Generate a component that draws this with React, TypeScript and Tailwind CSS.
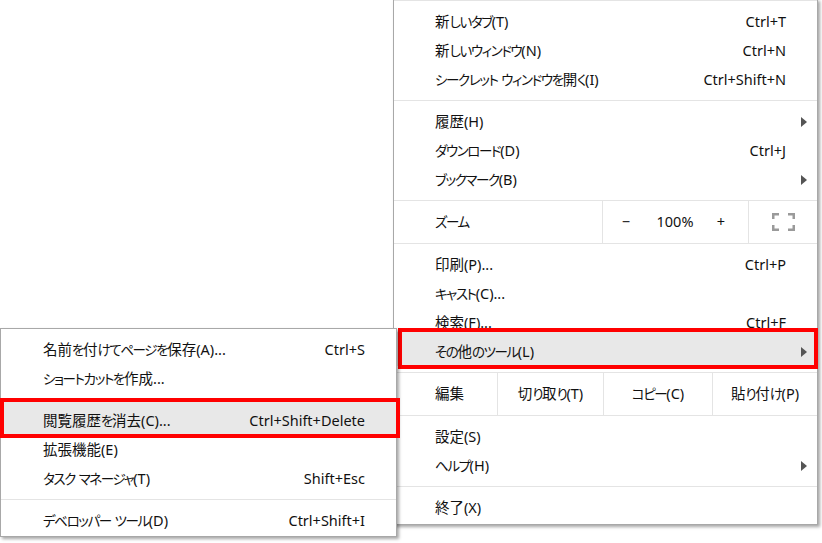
import React from 'react';

type Item = { label: string; shortcut?: string; arrow?: boolean; highlight?: boolean };

// kana in the reference font are narrower than Noto's, so shrink those runs a little
function Jp({ text }: { text: string }) {
  const parts = text.split(/([\u3040-\u30ff]+)/);
  return (
    <span className="whitespace-nowrap">
      {parts.map((p, i) =>
        /^[\u3040-\u30ff]+$/.test(p) ? (
          <span key={i} className="text-[13.5px] tracking-[-1.4px]">
            {p}
          </span>
        ) : (
          <React.Fragment key={i}>{p}</React.Fragment>
        )
      )}
    </span>
  );
}

function Arrow() {
  return (
    <svg width="6" height="10" viewBox="0 0 6 10">
      <polygon points="0,0 6,5 0,10" fill="#555" />
    </svg>
  );
}

function Row({ item, sub }: { item: Item; sub?: boolean }) {
  return (
    <div
      className={`flex h-[29px] items-center pr-[10px] ${sub ? 'pl-[42px]' : 'pl-[41px]'} ${
        item.highlight ? (sub ? 'bg-[#e8e8e8] shadow-[0_-4px_0_0_#e8e8e8]' : 'bg-[#e8e8e8] shadow-[0_-5px_0_0_#e8e8e8]') : ''
      }`}
    >
      <Jp text={item.label} />
      <span className="flex-1" />
      {item.shortcut && <span className="whitespace-nowrap">{item.shortcut}</span>}
      <span className="flex w-[21px] justify-end">{item.arrow && <Arrow />}</span>
    </div>
  );
}

function Sep() {
  return <div className="my-[6px] h-px bg-[#e4e4e4]" />;
}

function FullscreenIcon() {
  return (
    <svg width="23" height="18" viewBox="0 0 23 18" fill="none" stroke="#9a9a9a" strokeWidth="2.5">
      <path d="M1.25 6V1.25H7" />
      <path d="M16 1.25H21.75V6" />
      <path d="M1.25 12V16.75H7" />
      <path d="M16 16.75H21.75V12" />
    </svg>
  );
}

export default function App() {
  const top: Item[] = [
    { label: '新しいタブ(T)', shortcut: 'Ctrl+T' },
    { label: '新しいウィンドウ(N)', shortcut: 'Ctrl+N' },
    { label: 'シークレット ウィンドウを開く(I)', shortcut: 'Ctrl+Shift+N' },
  ];
  const history: Item[] = [
    { label: '履歴(H)', arrow: true },
    { label: 'ダウンロード(D)', shortcut: 'Ctrl+J' },
    { label: 'ブックマーク(B)', arrow: true },
  ];
  const tools: Item[] = [
    { label: '印刷(P)...', shortcut: 'Ctrl+P' },
    { label: 'キャスト(C)...' },
    { label: '検索(F)...', shortcut: 'Ctrl+F' },
    { label: 'その他のツール(L)', arrow: true, highlight: true },
  ];
  const settings: Item[] = [
    { label: '設定(S)' },
    { label: 'ヘルプ(H)', arrow: true },
  ];
  const subA: Item[] = [
    { label: '名前を付けてページを保存(A)...', shortcut: 'Ctrl+S' },
    { label: 'ショートカットを作成...' },
  ];
  const subB: Item[] = [
    { label: '閲覧履歴を消去(C)...', shortcut: 'Ctrl+Shift+Delete', highlight: true },
    { label: '拡張機能(E)' },
    { label: 'タスク マネージャ(T)', shortcut: 'Shift+Esc' },
  ];

  return (
    <div className="relative h-[543px] w-[822px] overflow-hidden bg-white font-['Noto_Sans','Noto_Sans_CJK_JP',sans-serif] text-[14.5px] text-[#111] [font-feature-settings:'palt']">
      {/* main menu */}
      <div className="absolute left-[393px] top-[-1px] w-[425px] border border-[#a8a8a8] bg-white pb-[2px] shadow-[2px_2px_3px_rgba(0,0,0,0.35)]">
        <div className="mb-[6px] h-px bg-[#e4e4e4]" />
        {top.map((it) => (
          <Row key={it.label} item={it} />
        ))}
        <Sep />
        {history.map((it) => (
          <Row key={it.label} item={it} />
        ))}
        <div className="mt-[6px] h-px bg-[#e4e4e4]" />
        <div className="flex h-[42px] items-stretch">
          <div className="flex flex-1 items-center pl-[41px]">
            <Jp text="ズーム" />
          </div>
          <div className="flex w-[146px] items-center border-l border-[#e4e4e4]">
            <span className="w-[46px] text-center">−</span>
            <span className="w-[52px] text-center">100%</span>
            <span className="w-[40px] text-center">+</span>
          </div>
          <div className="flex w-[69px] items-center justify-center border-l border-[#e4e4e4]">
            <FullscreenIcon />
          </div>
        </div>
        <div className="mb-[6px] h-px bg-[#e4e4e4]" />
        {tools.map((it) => (
          <Row key={it.label} item={it} />
        ))}
        <div className="mt-[6px] h-px bg-[#e4e4e4]" />
        <div className="flex h-[42px] items-stretch">
          <div className="flex w-[103px] items-center pl-[41px]">編集</div>
          <div className="flex w-[106px] items-center justify-center border-l border-[#e4e4e4]">
            <Jp text="切り取り(T)" />
          </div>
          <div className="flex w-[109px] items-center justify-center border-l border-[#e4e4e4]">
            <Jp text="コピー(C)" />
          </div>
          <div className="flex flex-1 items-center justify-center border-l border-[#e4e4e4]">
            <Jp text="貼り付け(P)" />
          </div>
        </div>
        <div className="mb-[6px] h-px bg-[#e4e4e4]" />
        {settings.map((it) => (
          <Row key={it.label} item={it} />
        ))}
        <Sep />
        <Row item={{ label: '終了(X)' }} />
        <div className="absolute left-[4px] top-[328px] h-[41px] w-[420px] border-4 border-[#ff0000]" />
      </div>

      {/* submenu */}
      <div className="absolute left-0 top-[328px] w-[397px] border border-[#a8a8a8] bg-white pb-px pt-[6px] shadow-[2px_2px_3px_rgba(0,0,0,0.35)]">
        {subA.map((it) => (
          <Row key={it.label} item={it} sub />
        ))}
        <Sep />
        {subB.map((it) => (
          <Row key={it.label} item={it} sub />
        ))}
        <Sep />
        <Row item={{ label: 'デベロッパー ツール(D)', shortcut: 'Ctrl+Shift+I' }} sub />
        <div className="absolute left-[-1px] top-[69px] h-[40px] w-[400px] border-4 border-[#ff0000]" />
      </div>
    </div>
  );
}
